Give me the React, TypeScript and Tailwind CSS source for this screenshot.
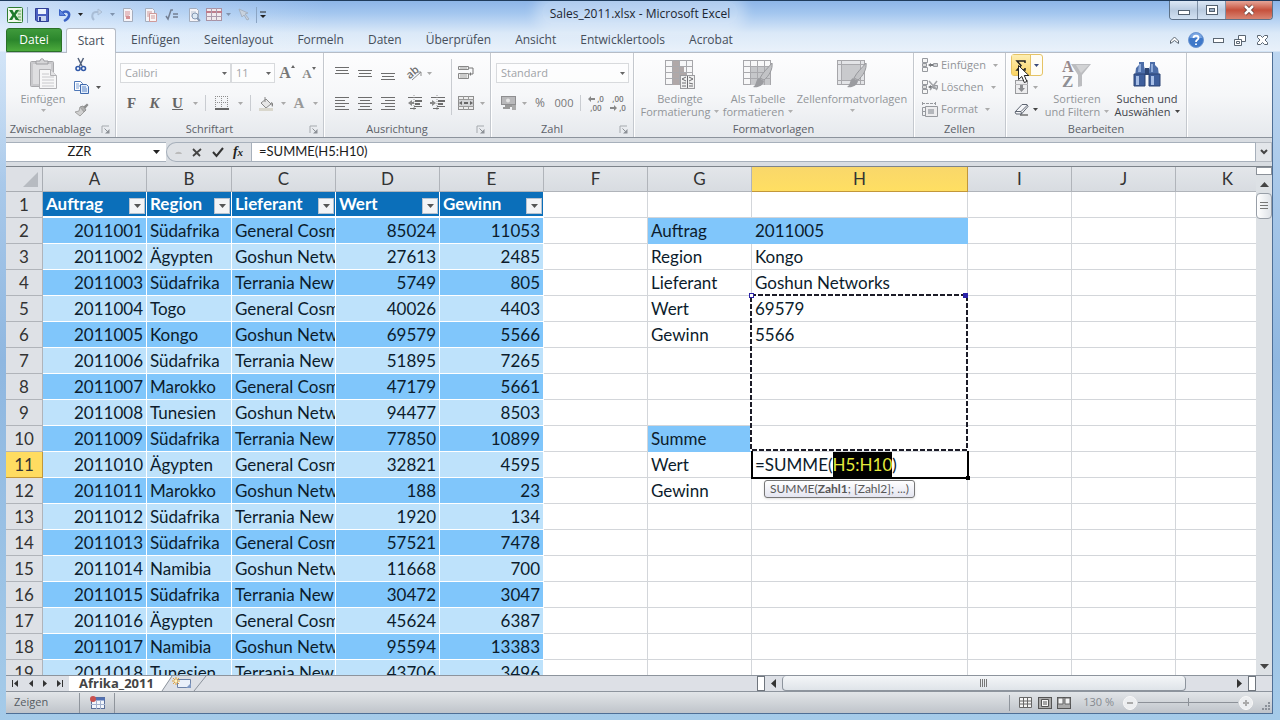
import type { ReactNode } from 'react';
import { clsx } from 'clsx';

/* ── Sheet data ── */

type Order = [number, string, string, number, number];

const ORDERS: Order[] = [
  [2011001, 'Südafrika', 'General Cosm', 85024, 11053],
  [2011002, 'Ägypten', 'Goshun Netw', 27613, 2485],
  [2011003, 'Südafrika', 'Terrania New', 5749, 805],
  [2011004, 'Togo', 'General Cosm', 40026, 4403],
  [2011005, 'Kongo', 'Goshun Netw', 69579, 5566],
  [2011006, 'Südafrika', 'Terrania New', 51895, 7265],
  [2011007, 'Marokko', 'General Cosm', 47179, 5661],
  [2011008, 'Tunesien', 'Goshun Netw', 94477, 8503],
  [2011009, 'Südafrika', 'Terrania New', 77850, 10899],
  [2011010, 'Ägypten', 'General Cosm', 32821, 4595],
  [2011011, 'Marokko', 'Goshun Netw', 188, 23],
  [2011012, 'Südafrika', 'Terrania New', 1920, 134],
  [2011013, 'Südafrika', 'General Cosm', 57521, 7478],
  [2011014, 'Namibia', 'Goshun Netw', 11668, 700],
  [2011015, 'Südafrika', 'Terrania New', 30472, 3047],
  [2011016, 'Ägypten', 'General Cosm', 45624, 6387],
  [2011017, 'Namibia', 'Goshun Netw', 95594, 13383],
  [2011018, 'Tunesien', 'Terrania New', 43706, 3496],
];

const COLUMNS = ['A', 'B', 'C', 'D', 'E', 'F', 'G', 'H', 'I', 'J', 'K'];
const HEADINGS = ['Auftrag', 'Region', 'Lieferant', 'Wert', 'Gewinn'];
const TABS = ['Einfügen', 'Seitenlayout', 'Formeln', 'Daten', 'Überprüfen', 'Ansicht', 'Entwicklertools', 'Acrobat'];

/* Lookup block in columns G and H, keyed by sheet row. */
const LOOKUP: Record<number, [string, string]> = {
  2: ['Auftrag', '2011005'],
  3: ['Region', 'Kongo'],
  4: ['Lieferant', 'Goshun Networks'],
  5: ['Wert', '69579'],
  6: ['Gewinn', '5566'],
  10: ['Summe', ''],
  11: ['Wert', ''],
  12: ['Gewinn', ''],
};

/* ── Small building blocks ── */

function Icon({ w = 16, h = 16, children }: { w?: number; h?: number; children: ReactNode }) {
  return (
    <svg width={w} height={h} viewBox={`0 0 ${w} ${h}`} fill="none" className="shrink-0 overflow-visible" aria-hidden="true">
      {children}
    </svg>
  );
}

function Arrow({ color = '#aaa' }: { color?: string }) {
  return (
    <Icon w={5} h={3}>
      <path d="M0 0h5L2.5 3z" fill={color} />
    </Icon>
  );
}

function Btn({ label, className, children }: { label: string; className?: string; children: ReactNode }) {
  return (
    <button type="button" aria-label={label} className={clsx('flex shrink-0 items-center justify-center', className)}>
      {children}
    </button>
  );
}

function Divider({ className }: { className?: string }) {
  return <span className={clsx('w-px shrink-0', className)} />;
}

function Group({ title, launcher, className, children }: { title: string; launcher?: boolean; className: string; children: ReactNode }) {
  return (
    <section className={clsx('flex shrink-0 flex-col border-r border-[#c4c8ce] shadow-[1px_0_0_#fff]', className)}>
      <div className="flex min-h-0 flex-1">{children}</div>
      <div className="flex h-4 items-center text-[11px] text-[#5c6168]">
        <span className="flex-1 text-center whitespace-nowrap">{title}</span>
        {launcher && (
          <Btn label={`${title} öffnen`} className="w-5">
            <Icon w={9} h={9}>
              <path d="M1 8V1h7" stroke="#a5a9ae" />
              <path d="M3.5 3.5L7 7" stroke="#8d9197" />
              <path d="M8.5 4v4.5H4z" fill="#8d9197" />
            </Icon>
          </Btn>
        )}
      </div>
    </section>
  );
}

function Combo({ label, value, className }: { label: string; value: string; className: string }) {
  return (
    <div className={clsx('relative h-5 shrink-0', className)}>
      <select
        aria-label={label}
        className="block h-full w-full appearance-none border border-[#d8dadd] bg-white/60 px-1 text-[11px] text-[#a0a3a7]"
      >
        <option>{value}</option>
      </select>
      <span className="pointer-events-none absolute inset-y-0 right-1 flex items-center">
        <Arrow color="#666" />
      </span>
    </div>
  );
}

function BigButton({ icon, lines, arrow, active, className }: { icon: ReactNode; lines: string[]; arrow: 'inline' | 'below'; active?: boolean; className: string }) {
  const arrowIcon = <Arrow color={active ? '#444' : '#b0b0b0'} />;
  return (
    <button
      type="button"
      className={clsx('flex shrink-0 flex-col items-center pt-[3px] text-[11px] leading-[13px]', active ? 'text-[#3f444b]' : 'text-[#929599]', className)}
    >
      <span className="flex h-9 items-center">{icon}</span>
      {lines.map((line, i) => (
        <span key={line} className="flex items-center gap-1 whitespace-nowrap">
          {line}
          {arrow === 'inline' && i === lines.length - 1 && arrowIcon}
        </span>
      ))}
      {arrow === 'below' && <span className="pt-1">{arrowIcon}</span>}
    </button>
  );
}

/* ── Icons ── */

function Lines({ rows }: { rows: [number, number, number][] }) {
  return (
    <Icon>
      {rows.map(([x, y, w]) => (
        <rect key={y} x={x} y={y} width={w} height={1} fill="#6d6d6d" />
      ))}
    </Icon>
  );
}

function ExcelIcon() {
  return (
    <Icon>
      <rect x="0.5" y="0.5" width="15" height="15" rx="1" fill="#f2faee" stroke="#2f7d32" />
      <path d="M10 2h5v12h-5z" fill="#d5ecd0" />
      <path d="M11 4h3M11 7h3M11 10h3M11 13h3" stroke="#67a765" />
      <path d="M2 3h3.5l1.6 3L8.8 3H12L8.7 8l3.5 5H8.7L7 9.8 5.2 13H2l3.3-5z" fill="#1f7a2d" />
    </Icon>
  );
}

function SaveIcon() {
  return (
    <Icon w={14} h={14}>
      <path d="M0.5 0.5h13v13H2L0.5 12z" fill="#4b5fc0" stroke="#303f94" />
      <rect x="3" y="1" width="8" height="5" fill="#eef3fd" />
      <rect x="3" y="8" width="8" height="5" fill="#c8d4ee" />
      <rect x="4" y="9" width="2" height="4" fill="#303f94" />
    </Icon>
  );
}

function UndoIcon({ redo }: { redo?: boolean }) {
  return (
    <Icon w={13} h={14}>
      {redo ? (
        <g stroke="#a9bdd6">
          <path d="M4 12C1 9 2 4 6 4h4" strokeWidth="2" />
          <path d="M8 1l4 3-4 3z" fill="#c6d5e8" />
        </g>
      ) : (
        <g stroke="#3a62c4">
          <path d="M4 5c4-3 8-1 7 3-1 3-3 4-5 5" strokeWidth="2.5" />
          <path d="M1.5 1.5v6h6z" fill="#5b83dd" />
        </g>
      )}
    </Icon>
  );
}

function PageIcon({ accent, mark }: { accent: string; mark: 'page' | 'copy' | 'lens' }) {
  return (
    <Icon w={14} h={14}>
      <path d="M2.5 0.5h7l2 2v11h-9z" fill="#f6f4f8" stroke="#a4adbd" />
      <path d="M4 4h5M4 6h5M4 8h4" stroke={accent} />
      {mark === 'page' && <path d="M5 8h4v3H5z" fill={accent} />}
      {mark === 'copy' && <path d="M6.5 5.5h7v8h-7zM8 8h4M8 10h4" fill="#f9f5f5" stroke={accent} />}
      {mark === 'lens' && (
        <g stroke="#8698b3">
          <circle cx="8" cy="8" r="3" fill="#dce8f4" />
          <path d="M10 10l3 3" strokeWidth="2" />
        </g>
      )}
    </Icon>
  );
}

function ScissorsIcon() {
  return (
    <Icon w={12} h={14}>
      <path d="M3 0l4 8M8.5 0L4.5 8" stroke="#52617c" strokeWidth="1.5" />
      <circle cx="3" cy="10.5" r="2" stroke="#3159a8" strokeWidth="1.6" />
      <circle cx="8.5" cy="10.5" r="2" stroke="#3159a8" strokeWidth="1.6" />
    </Icon>
  );
}

function CopyIcon() {
  return (
    <Icon w={15} h={13}>
      <path d="M0.5 0.5h6l2 2v7h-8z" fill="#fff" stroke="#4f78b8" />
      <path d="M2 3h3M2 5h4M2 7h3" stroke="#7da0d6" />
      <path d="M6.5 3.5h6l2 2v7h-8z" fill="#e4eefb" stroke="#3f69ad" />
      <path d="M8 6h4M8 8h5M8 10h5" stroke="#5d86c8" />
    </Icon>
  );
}

function BrushIcon() {
  return (
    <Icon w={15} h={13}>
      <path d="M9 4l4-3.5 1.5 1.5L11 6z" fill="#8d8d8d" />
      <path d="M6 4l3-1 3 4-2 2z" fill="#b0b0b0" stroke="#939393" />
      <path d="M6 4l4 5-4 4-5-4 4-1z" fill="#d0d0d0" stroke="#a3a3a3" />
    </Icon>
  );
}

function PasteIcon() {
  return (
    <Icon w={28} h={32}>
      <rect x="1.500" y="3.500" width="23" height="25" rx="1" fill="#c9c9cc" stroke="#a9a9ac" />
      <rect x="4" y="6" width="18" height="20" fill="#dedee0" />
      <path d="M7 6V3h4c0-3 4-3 4 0h4v3z" fill="#d6d6d8" stroke="#9c9ca0" />
      <path d="M10.5 11.5h11l6 6v13h-17z" fill="#f7f7f8" stroke="#b1b1b4" />
      <path d="M21.5 11.5v6h6" fill="#e2e2e4" stroke="#b1b1b4" />
      <path d="M13 16h7M13 19h12M13 22h12M13 25h12M13 28h12" stroke="#c8c8cb" />
    </Icon>
  );
}

function SheetIcon({ kind }: { kind: 'cond' | 'table' | 'style' }) {
  return (
    <Icon w={32} h={32}>
      <rect x="1.5" y="2.5" width="27" height="24" fill={kind === 'style' ? '#e3e4e7' : '#f7f7f8'} stroke="#a6a6aa" />
      {kind === 'cond' && <path d="M8 3h7v24H8zM15 8h5v6h-5zM15 14h8v6h-8z" fill="#b0a8a8" />}
      {kind === 'table' && <path d="M9 9h19v18H9z" fill="#c6c7ca" />}
      {kind === 'style' && <path d="M6 7h18v15H6z" fill="#c9cacd" />}
      <path
        d={kind === 'style' ? 'M5.5 2v25M24.5 2v25M1 6.5h28M1 22.5h28' : 'M8.5 2v25M15.5 2v25M22.5 2v25M1 8.5h28M1 14.5h28M1 20.5h28'}
        stroke="#a9a9ad"
      />
      {kind === 'cond' ? (
        <g>
          <rect x="16.5" y="17.5" width="14" height="13" fill="#f1f1f1" stroke="#9b9b9e" />
          <path d="M18 21l4-2M18 21l4 2M18 25h4M18 28h4M25 19l4 2-4 2M25 25l4 1M25 28h4M23.5 18v12" stroke="#6c6c70" />
        </g>
      ) : (
        <g>
          <path d="M30 5c1 6-3 13-8 17l-4-2c3-6 8-10 12-15z" fill="#c2c3c6" stroke="#98999d" />
          <path d="M17 20l5 3c-1 5-6 7-11 6 4-2 2-7 6-9z" fill="#9b9ca0" />
        </g>
      )}
    </Icon>
  );
}

function CellsIcon({ kind }: { kind: 'insert' | 'delete' | 'format' }) {
  return (
    <Icon w={16} h={15}>
      {kind === 'format' ? (
        <g stroke="#96999e">
          <path d="M0.5 0v3M0 1.5h13M13.5 0v3" strokeDasharray="3 1" />
          <path d="M3.5 4.5h12v10h-12z" fill="#ececee" />
          <path d="M6 7h6v5H6z" fill="#b4b7bc" stroke="none" />
          <path d="M0.5 5.5h3v4h-3zM0.5 9.5h3v4h-3z" />
        </g>
      ) : (
        <g stroke="#96999e">
          <path d="M0.5 0.5h5v4h-5zM0.5 9.5h5v4h-5z" fill="#f6f6f6" />
          <path d="M0.5 5.5h4v3h-4z" fill="#ddd" />
          <path d="M9 5l-3 2 3 2z" fill="#77797d" stroke="none" />
          <path d="M9 7h2" stroke="#77797d" strokeWidth="2" />
          <path d="M11.5 5.5h4v3h-4z" fill="#cfd1d4" />
          {kind === 'delete' && <path d="M7 1l8 9M15 1l-7 9" stroke="#a2a4a8" strokeWidth="1.5" />}
        </g>
      )}
    </Icon>
  );
}

function SortIcon() {
  return (
    <Icon w={30} h={30}>
      <path d="M9 5h20L20 16v11l-4 1V16z" fill="#bcbdc0" />
      <path d="M14 6h13l-8 8z" fill="#d2d3d5" />
      <text x="0" y="13" fontFamily="Liberation Serif, serif" fontSize="16" fontWeight="700" fill="#97898c">A</text>
      <text x="0" y="28" fontFamily="Liberation Serif, serif" fontSize="17" fontWeight="700" fill="#8e8f94">Z</text>
    </Icon>
  );
}

function BinocularsIcon() {
  return (
    <Icon w={28} h={26}>
      <path d="M6 1h5v4l1 4v6H2l1-8 3-3zM17 1h5v3l3 3 1 8H16V9l1-4z" fill="#4c6da8" />
      <path d="M12 7h4v7h-4z" fill="#2e4674" />
      <path d="M1 13h11v12H1zM16 13h11v12H16z" fill="#3f5f9c" stroke="#2c4475" />
      <path d="M3 15h3v9H3zM18 15h3v9h-3z" fill="#a7bee6" />
      <path d="M6 3h2v8H5zM18 3h2v8h-2z" fill="#90abd9" />
    </Icon>
  );
}

function Serif({ children, className }: { children: ReactNode; className?: string }) {
  return <span className={clsx('font-[Liberation_Serif,serif] font-bold', className)}>{children}</span>;
}

/* ── Title bar and ribbon ── */

function TitleBar() {
  return (
    <header className="flex h-[27px] shrink-0 items-start">
      <div className="flex h-full flex-1 items-center pl-px">
        <ExcelIcon />
        <Divider className="mx-1 h-4 bg-[#8ba5c4]" />
        <Btn label="Speichern" className="w-5"><SaveIcon /></Btn>
        <Btn label="Rückgängig" className="w-6"><UndoIcon /></Btn>
        <Btn label="Rückgängig-Liste" className="w-2"><Arrow color="#222" /></Btn>
        <Btn label="Wiederholen" className="w-6"><UndoIcon redo /></Btn>
        <Btn label="Wiederholen-Liste" className="w-2"><Arrow color="#7f93ad" /></Btn>
        <Btn label="Seite" className="w-6"><PageIcon accent="#d58f94" mark="page" /></Btn>
        <Btn label="Kopie" className="w-5"><PageIcon accent="#cf9a9a" mark="copy" /></Btn>
        <Btn label="Formeln prüfen" className="w-6">
          <Icon w={14} h={12}>
            <path d="M1 7l2 3L6 1h2" stroke="#737f92" strokeWidth="1.5" />
            <path d="M8 5h5M8 8h5" stroke="#737f92" strokeWidth="1.5" />
          </Icon>
        </Btn>
        <Btn label="Vorschau" className="w-5"><PageIcon accent="#b9c3d2" mark="lens" /></Btn>
        <Btn label="Tabelle" className="w-5">
          <Icon w={16} h={13}>
            <rect x="0.5" y="0.5" width="15" height="12" fill="#f1e9ed" stroke="#a893a5" />
            <path d="M0 4h16" stroke="#bf7c8c" strokeWidth="2" />
            <path d="M5.5 0v13M10.5 0v13M0 8.5h16" stroke="#ad9bae" />
          </Icon>
        </Btn>
        <Btn label="Tabellen-Liste" className="w-2"><Arrow color="#7f93ad" /></Btn>
        <Btn label="Objekte markieren" className="w-6">
          <Icon w={13} h={13}>
            <path d="M1 1l9 4-3 1 4 5-2 1-3-5-2 2z" fill="#c8d2de" stroke="#a5b1c1" />
          </Icon>
        </Btn>
        <Divider className="h-4 bg-[#8ba5c4]" />
        <Btn label="Symbolleiste anpassen" className="w-3">
          <Icon w={8} h={8}>
            <path d="M1 1h6" stroke="#222" />
            <path d="M1 4h6L4 7z" fill="#222" />
          </Icon>
        </Btn>
      </div>
      <h1 className="rounded-full bg-white/30 px-2 pt-[3px] text-[12px] leading-5 text-[#1c2530] shadow-[0_0_12px_8px_#ffffff4d]">Sales_2011.xlsx - Microsoft Excel</h1>
      <div className="flex flex-1 justify-end">
        <div className="flex h-[19px] overflow-hidden rounded-b border border-t-0 border-[#5d7187]">
          <Btn label="Minimieren" className="w-7 border-r border-[#7e90a5] bg-linear-to-b from-[#dce8f5] via-[#b9cbe0] to-[#d3e2f2]">
            <Icon w={12} h={12}><rect x="0.5" y="6.5" width="11" height="4" fill="#fff" stroke="#53616f" /></Icon>
          </Btn>
          <Btn label="Maximieren" className="w-7 border-r border-[#7e90a5] bg-linear-to-b from-[#dce8f5] via-[#b9cbe0] to-[#d3e2f2]">
            <Icon w={12} h={10}>
              <rect x="0.5" y="0.5" width="11" height="9" fill="#fff" stroke="#53616f" />
              <rect x="3.5" y="3.5" width="5" height="3" fill="#9fb1c6" stroke="#53616f" />
            </Icon>
          </Btn>
          <Btn label="Schließen" className="w-[46px] bg-linear-to-b from-[#e5a598] via-[#c5503c] to-[#d88472]">
            <Icon w={12} h={10}>
              <path d="M2 1l8 8M10 1L2 9" stroke="#5b3430" strokeWidth="4" />
              <path d="M2 1l8 8M10 1L2 9" stroke="#fff" strokeWidth="2.5" />
            </Icon>
          </Btn>
        </div>
      </div>
    </header>
  );
}

function TabRow() {
  return (
    <nav className="flex h-6 shrink-0 items-stretch text-[12px] text-[#464e5a]">
      <button type="button" className="w-14 rounded-t-[3px] border border-[#2b7128] bg-linear-to-b from-[#3f9a3c] via-[#2b862c] to-[#4cab3c] text-white">Datei</button>
      <button type="button" className="z-10 -mb-px ml-1 w-[50px] rounded-t-[3px] border border-b-0 border-[#b6bcc6] bg-[#fdfdfe]">Start</button>
      <div className="flex flex-1 pl-[3px]">
        {TABS.map((tab) => (
          <button key={tab} type="button" className="px-3">{tab}</button>
        ))}
      </div>
      <Btn label="Menüband minimieren" className="w-[22px]">
        <Icon w={9} h={8}><path d="M0.5 5L4.5 1l4 4v2.5l-4-3-4 3z" fill="#fff" stroke="#5b6672" /></Icon>
      </Btn>
      <Btn label="Hilfe" className="w-[22px]">
        <Icon>
          <circle cx="8" cy="8" r="7.5" fill="#3f78c9" stroke="#6f98d3" />
          <path d="M2 6a6 5 0 0 1 12 0z" fill="#7ba6e2" />
          <path d="M5.5 6c0-3 5-3 5 0 0 2-2.5 1.5-2.5 4M8 11.500v1.5" stroke="#fff" strokeWidth="1.8" />
        </Icon>
      </Btn>
      <Btn label="Fenster minimieren" className="w-[22px]">
        <Icon w={11} h={5}><rect x="0.5" y="0.5" width="10" height="4" fill="#fff" stroke="#5b6672" /></Icon>
      </Btn>
      <Btn label="Fenster wiederherstellen" className="w-[22px]">
        <Icon w={12} h={11}>
          <path d="M4.5 0.5h7v6h-7z" fill="#fff" stroke="#5b6672" />
          <path d="M0.5 4.5h7v6h-7z" fill="#fff" stroke="#5b6672" />
          <path d="M2.5 6.5h3v2h-3z" stroke="#5b6672" />
        </Icon>
      </Btn>
      <Btn label="Arbeitsmappe schließen" className="w-[22px]">
        <Icon w={11} h={10}><path d="M0.5 0.5h3l2 2 2-2h3v2L8 5l2.5 2.5v2h-3l-2-2-2 2h-3v-2L3 5 0.5 2.5z" fill="#fff" stroke="#5b6672" /></Icon>
      </Btn>
    </nav>
  );
}

function Ribbon() {
  return (
    <div className="flex h-[86px] shrink-0 border-t border-b border-t-[#b6bcc6] border-b-[#8c939c] bg-linear-to-b from-[#fdfdfe] via-[#f6f7f9] to-[#e6e9ed]">
      <Group title="Zwischenablage" launcher className="w-[110px]">
        <BigButton className="w-[62px] pl-3" icon={<PasteIcon />} lines={['Einfügen']} arrow="below" />
        <div className="flex flex-col pt-px">
          <Btn label="Ausschneiden" className="h-[22px] w-[26px]"><ScissorsIcon /></Btn>
          <div className="flex">
            <Btn label="Kopieren" className="h-[22px] w-[26px]"><CopyIcon /></Btn>
            <Btn label="Kopieroptionen" className="w-2"><Arrow color="#555" /></Btn>
          </div>
          <Btn label="Format übertragen" className="h-[22px] w-[26px]"><BrushIcon /></Btn>
        </div>
      </Group>

      <Group title="Schriftart" launcher className="w-[208px]">
        <div className="flex flex-col gap-2.5 px-1 pt-2.5">
          <div className="flex h-5 items-center">
            <Combo label="Schriftart" value="Calibri" className="w-[111px]" />
            <Combo label="Schriftgrad" value="11" className="w-11" />
            <Btn label="Schriftgrad vergrößern" className="w-6 text-[#777]">
              <Serif className="text-[16px] leading-none">A</Serif><span className="self-start"><Icon w={4} h={3}><path d="M0 3h4L2 0z" fill="#666" /></Icon></span>
            </Btn>
            <Btn label="Schriftgrad verkleinern" className="w-5 text-[#888]">
              <Serif className="text-[13px] leading-none">A</Serif><span className="self-start"><Icon w={4} h={3}><path d="M0 0h4L2 3z" fill="#666" /></Icon></span>
            </Btn>
          </div>
          <div className="flex h-5 items-center text-[15px] text-[#666]">
            <Btn label="Fett" className="w-[23px]"><Serif>F</Serif></Btn>
            <Btn label="Kursiv" className="w-[23px]"><Serif className="italic">K</Serif></Btn>
            <Btn label="Unterstrichen" className="w-[23px]"><Serif className="underline">U</Serif></Btn>
            <Btn label="Unterstreichungsart" className="w-3"><Arrow /></Btn>
            <Divider className="mx-1 h-4 bg-[#c9ccd1]" />
            <Btn label="Rahmen" className="w-6">
              <Icon w={14} h={14}>
                <path d="M0.5 0v13M6.5 0v13M12.5 0v13M0 0.5h13M0 6.5h13" stroke="#8e8e8e" strokeDasharray="1 1" />
                <path d="M0 13h14" stroke="#666" strokeWidth="2" />
              </Icon>
            </Btn>
            <Btn label="Rahmenart" className="w-3"><Arrow /></Btn>
            <Divider className="mx-1 h-4 bg-[#c9ccd1]" />
            <Btn label="Füllfarbe" className="w-6">
              <Icon w={16} h={15}>
                <path d="M6 1v5M2 7l5-4 5 5-5 4z" fill="#e6e6e6" stroke="#8a8a8a" />
                <path d="M12 6c3 1 2 4 1 5z" fill="#777" />
                <rect x="0" y="12" width="14" height="3" fill="#d9d7cd" />
              </Icon>
            </Btn>
            <Btn label="Füllfarben" className="w-2"><Arrow /></Btn>
            <Btn label="Schriftfarbe" className="w-6 text-[#999]"><Serif>A</Serif></Btn>
            <Btn label="Schriftfarben" className="w-2"><Arrow /></Btn>
          </div>
        </div>
      </Group>

      <Group title="Ausrichtung" launcher className="w-[167px]">
        <div className="flex w-[127px] flex-col gap-2.5 pt-2.5 pl-1.5">
          <div className="flex h-5 items-center">
            <Btn label="Oben ausrichten" className="w-[23px]"><Lines rows={[[1, 2, 14], [2, 5, 12], [1, 8, 14]]} /></Btn>
            <Btn label="Zentriert ausrichten" className="w-[23px]"><Lines rows={[[1, 5, 14], [2, 8, 12], [1, 11, 14]]} /></Btn>
            <Btn label="Unten ausrichten" className="w-[23px]"><Lines rows={[[1, 8, 14], [2, 11, 12], [1, 14, 14]]} /></Btn>
            <Btn label="Ausrichtung" className="ml-1 w-6">
              <Icon w={16} h={16}>
                <text x="0" y="11" fontFamily="Open Sans, sans-serif" fontSize="11" fontWeight="600" fill="#6e6e6e" transform="rotate(-40 6 9)">ab</text>
                <path d="M5 15l9-8M14 7v4M14 7h-4" stroke="#8d8d8d" />
              </Icon>
            </Btn>
            <Btn label="Ausrichtungsart" className="w-1"><Arrow /></Btn>
          </div>
          <div className="flex h-5 items-center">
            <Btn label="Linksbündig" className="w-[23px]"><Lines rows={[[1, 2, 14], [1, 5, 10], [1, 8, 14], [1, 11, 10], [1, 14, 14]]} /></Btn>
            <Btn label="Zentriert" className="w-[23px]"><Lines rows={[[1, 2, 14], [3, 5, 10], [1, 8, 14], [3, 11, 10], [1, 14, 14]]} /></Btn>
            <Btn label="Rechtsbündig" className="w-[23px]"><Lines rows={[[1, 2, 14], [5, 5, 10], [1, 8, 14], [5, 11, 10], [1, 14, 14]]} /></Btn>
            <Btn label="Einzug verkleinern" className="ml-1 w-[23px]">
              <Icon>
                <path d="M1 2.5h14M8 5.5h7M8 8.5h5M7 11.5h8M3 13.5h6" stroke="#6d6d6d" />
                <path d="M8 5h7v2H8zM8 8h5v2H8z" fill="#6d6d6d" />
                <path d="M7 0v16" stroke="#999" strokeDasharray="1 1" />
                <path d="M5 5L1 8l4 3V9h2V7H5z" fill="#888" />
              </Icon>
            </Btn>
            <Btn label="Einzug vergrößern" className="w-[23px]">
              <Icon>
                <path d="M1 2.5h14M8 5.5h7M8 8.5h5M7 11.5h8M3 13.5h6" stroke="#6d6d6d" />
                <path d="M8 5h7v2H8zM8 8h5v2H8z" fill="#6d6d6d" />
                <path d="M7 0v16" stroke="#999" strokeDasharray="1 1" />
                <path d="M2 5l4 3-4 3V9H0V7h2z" fill="#888" />
              </Icon>
            </Btn>
          </div>
        </div>
        <Divider className="mt-1.5 h-14 bg-[#c9ccd1]" />
        <div className="flex flex-col gap-2.5 pt-2.5 pl-1.5">
          <Btn label="Zeilenumbruch" className="h-5 w-4">
            <Icon>
              <path d="M0.5 1.5h10v3h-10zM0.5 8.5h10v5h-10z" fill="#eee" stroke="#888" />
              <path d="M2 3h7M2 10h7M2 12h7" stroke="#aaa" />
              <path d="M11 3h4v6h-3" stroke="#777" />
              <path d="M13 7v4l-2-2z" fill="#777" />
            </Icon>
          </Btn>
          <div className="flex h-5 items-center gap-1">
            <Btn label="Verbinden und zentrieren" className="w-4">
              <Icon>
                <rect x="0.5" y="1.5" width="15" height="13" fill="#eee" stroke="#8f8f8f" />
                <path d="M0 4.5h16M0 11.5h16M5.5 1v3M10.5 1v3M5.5 12v3M10.5 12v3" stroke="#999" />
                <path d="M1 5h14v6H1z" fill="#d3d4d6" />
                <path d="M1 8l3-2v4zM15 8l-3-2v4zM6 7h4v2H6z" fill="#666" />
              </Icon>
            </Btn>
            <Btn label="Verbindungsart" className="w-2"><Arrow /></Btn>
          </div>
        </div>
      </Group>

      <Group title="Zahl" launcher className="w-[143px]">
        <div className="flex flex-1 flex-col gap-2.5 pt-2.5 pr-1 pl-[5px]">
          <Combo label="Zahlenformat" value="Standard" className="w-full" />
          <div className="flex h-5 items-center text-[12px] text-[#777]">
            <Btn label="Buchhaltungsformat" className="w-6">
              <Icon w={17} h={16}>
                <rect x="1.5" y="1.5" width="14" height="8" fill="#b9b9bb" stroke="#8e8e90" />
                <circle cx="8" cy="5.5" r="2" fill="#e5e5e5" />
                <path d="M5 11h8M3 13h7" stroke="#999" strokeWidth="2" />
                <path d="M12 10h4v5h-4z" fill="#aaa" />
              </Icon>
            </Btn>
            <Btn label="Währungen" className="w-2"><Arrow /></Btn>
            <Btn label="Prozent" className="w-6">%</Btn>
            <Btn label="Tausendertrennzeichen" className="w-6 text-[11px]">000</Btn>
            <Divider className="mx-1 h-4 bg-[#c9ccd1]" />
            {/* 7px figures, two short lines with an arrow beside them */}
            <Btn label="Dezimalstelle hinzufügen" className="w-[22px] flex-col text-[8px] leading-[9px] font-semibold">
              <span className="flex items-center gap-0.5"><Icon w={7} h={6}><path d="M3 0L0 3l3 3V4h4V2H3z" fill="#888" /></Icon>,0</span>
              <span>,00</span>
            </Btn>
            <Btn label="Dezimalstelle löschen" className="w-[22px] flex-col text-[8px] leading-[9px] font-semibold">
              <span>,00</span>
              <span className="flex items-center gap-0.5"><Icon w={7} h={6}><path d="M4 0l3 3-3 3V4H0V2h4z" fill="#888" /></Icon>,0</span>
            </Btn>
          </div>
        </div>
      </Group>

      <Group title="Formatvorlagen" className="w-[280px]">
        <BigButton className="w-[88px] pl-1" icon={<SheetIcon kind="cond" />} lines={['Bedingte', 'Formatierung']} arrow="inline" />
        <BigButton className="w-[72px]" icon={<SheetIcon kind="table" />} lines={['Als Tabelle', 'formatieren']} arrow="inline" />
        <BigButton className="w-[116px]" icon={<SheetIcon kind="style" />} lines={['Zellenformatvorlagen']} arrow="below" />
      </Group>

      <Group title="Zellen" className="w-[92px]">
        <div className="flex flex-1 flex-col px-2 pt-px text-[11px] text-[#929599]">
          {([['insert', 'Einfügen'], ['delete', 'Löschen'], ['format', 'Format']] as const).map(([kind, text]) => (
            <button key={kind} type="button" className="flex h-[22px] items-center gap-[3px]">
              <CellsIcon kind={kind} />
              <span className="pr-1">{text}</span>
              <Arrow />
            </button>
          ))}
        </div>
      </Group>

      <Group title="Bearbeiten" className="w-[181px]">
        <div className="flex flex-col pt-px pl-[5px]">
          <div className="relative flex h-[22px] rounded-[3px] border border-[#e5c365] bg-[#fffdf5]">
            <Btn label="Summe" className="w-[19px] border-r border-[#e5c365] bg-linear-to-b from-[#fdeeb2] to-[#fbd462]">
              <Icon w={10} h={11}><path d="M9 3V1H1l4 4.5L1 10h8V8" stroke="#222" strokeWidth="1.5" /></Icon>
            </Btn>
            <Btn label="Summenfunktionen" className="w-[11px]"><Arrow color="#3a4a7a" /></Btn>
            {/* mouse pointer */}
            <span className="pointer-events-none absolute top-2.5 left-1.5 z-10">
              <Icon w={13} h={19}>
                <path d="M0.5 0.5v14l3.3-3 2.500 6 2.6-1-2.6-6h4.5z" fill="#fff" stroke="#222" />
              </Icon>
            </span>
          </div>
          <div className="flex h-[22px]">
            <Btn label="Füllbereich" className="w-5">
              <Icon w={13} h={14}>
                <rect x="0.5" y="0.5" width="12" height="13" fill="#ececee" stroke="#98999c" />
                <path d="M0 4.5h13" stroke="#b5b5b8" />
                <path d="M5 5h3v3h2l-3.500 4L3 8h2z" fill="#8b8c90" />
              </Icon>
            </Btn>
            <Btn label="Fülloptionen" className="w-[9px]"><Arrow /></Btn>
          </div>
          <div className="flex h-[22px]">
            <Btn label="Löschen" className="w-5">
              <Icon w={15} h={13}>
                <path d="M1 9l7-7.500h5l1 2L7.500 11H2z" fill="#f5f6f9" stroke="#5f6672" />
                <path d="M7.5 11L7 8.5H1.500M7 8.500l6.500-6.500" stroke="#5f6672" />
                <path d="M6 12h8" stroke="#333" />
              </Icon>
            </Btn>
            <Btn label="Löschoptionen" className="w-[9px]"><Arrow color="#444" /></Btn>
          </div>
        </div>
        <BigButton className="w-[68px]" icon={<SortIcon />} lines={['Sortieren', 'und Filtern']} arrow="inline" />
        <BigButton active className="w-[72px]" icon={<BinocularsIcon />} lines={['Suchen und', 'Auswählen']} arrow="inline" />
      </Group>
    </div>
  );
}

function FormulaBar() {
  return (
    <div className="flex h-[29px] shrink-0 border-b border-[#7d838a] bg-[#d9dde2] pt-1 pb-1 text-[#1c1c1c]">
      <div className="flex w-40 shrink-0 items-center border-y border-[#a7b0bb] bg-white pr-1.5">
        <input aria-label="Namenfeld" defaultValue="ZZR" className="min-w-0 flex-1 bg-transparent text-center text-[13px] outline-none font-[Lato,sans-serif]" />
        <Icon w={7} h={4}><path d="M0 0h7L3.5 4z" fill="#222" /></Icon>
      </div>
      <div className="flex w-[85px] shrink-0 items-center rounded-l-full border border-r-0 border-[#a7b0bb] bg-[#dfe2e6]">
        <span className="w-5 pl-2"><Icon w={7} h={3}><path d="M0 3c1-3 6-3 7 0z" fill="#bbb" /></Icon></span>
        <Btn label="Abbrechen" className="w-5">
          <Icon w={10} h={9}><path d="M1 1l7 7M9 1L1 8" stroke="#444" strokeWidth="1.800" /></Icon>
        </Btn>
        <Btn label="Eingeben" className="w-[21px]">
          <Icon w={12} h={10}><path d="M1 5l3.500 4L11 1" stroke="#333" strokeWidth="2" /></Icon>
        </Btn>
        <Btn label="Funktion einfügen" className="w-5 text-[14px] text-[#222]">
          <Serif className="leading-none italic">f<span className="text-[11px]">x</span></Serif>
        </Btn>
      </div>
      <input aria-label="Bearbeitungsleiste" defaultValue="=SUMME(H5:H10)" className="min-w-0 flex-1 border border-[#a7b0bb] bg-white px-[7px] text-[13px] outline-none font-[Lato,sans-serif]" />
      <Btn label="Bearbeitungsleiste erweitern" className="w-4 border border-l-0 border-[#b5bac1] bg-[#e3e6ea]">
        <Icon w={8} h={6}><path d="M1 1l3 3 3-3" stroke="#444" strokeWidth="2" /></Icon>
      </Btn>
    </div>
  );
}

/* ── Sheet ── */

type Fill = 'light' | 'mid' | 'block';

function Cell({ fill, right, clip = true, children }: { fill?: Fill; right?: boolean; clip?: boolean; children?: ReactNode }) {
  return (
    <td
      className={clsx(
        'h-[26px] border-r border-b px-[3px] whitespace-nowrap',
        clip ? 'overflow-hidden' : 'relative',
        right && 'text-right',
        fill === 'mid' && 'border-white bg-[#80c6fb]',
        fill === 'light' && 'border-white bg-[#bee2fb]',
        fill === 'block' && 'border-[#80c6fb] bg-[#80c6fb]',
        !fill && 'border-[#d3d6da] bg-white',
      )}
    >
      {children}
    </td>
  );
}

/* Dashed outline round the six referenced cells below its anchor. */
function ReferenceOutline() {
  return (
    <div className="pointer-events-none absolute -top-px -left-px z-10 h-[155px] w-[216px]">
      <svg className="h-full w-full overflow-visible" fill="none" aria-hidden="true">
        <rect width="100%" height="100%" stroke="#fff" strokeWidth="2" />
        <rect width="100%" height="100%" stroke="#1c1c28" strokeWidth="2" strokeDasharray="5 2" />
        <rect x="-1.5" y="-1.5" width="4" height="4" fill="#fff" stroke="#2a22a8" />
        <rect x="212" y="-2" width="5" height="5" fill="#2a22a8" />
      </svg>
    </div>
  );
}

function ActiveCell() {
  return (
    <>
      <span>=SUMME(<mark className="bg-black py-0.5 text-[#e4ea3c]">H5:H10</mark>)</span>
      <div className="pointer-events-none absolute -top-px -right-0.5 -bottom-0.5 -left-px border-2 border-t-0 border-black" />
      <div className="pointer-events-none absolute -right-[3px] -bottom-[3px] h-1 w-1 bg-black" />
      <div
        role="tooltip"
        className="absolute top-[28px] left-3 z-10 rounded-[3px] border border-[#777] bg-linear-to-b from-white to-[#e4e5f0] px-[5px] text-[12px] leading-4 text-[#575757] shadow-sm font-[Lato,sans-serif]"
      >
        SUMME(<b>Zahl1</b>; [Zahl2]; ...)
      </div>
    </>
  );
}

function Grid() {
  return (
    <div className="flex min-h-0 flex-1 overflow-hidden bg-white">
      <div className="min-w-0 flex-1 overflow-hidden">
        <table className="w-[1274px] table-fixed border-separate border-spacing-0 text-[17px] leading-[25px] text-[#0c1c2c] font-[Lato,sans-serif]">
          <colgroup>
            <col className="w-[37px]" />
            {COLUMNS.map((c) => (
              <col key={c} className={c === 'B' ? 'w-[85px]' : c === 'H' ? 'w-[216px]' : 'w-[104px]'} />
            ))}
          </colgroup>
          <thead>
            <tr className="text-[#333]">
              <th className="h-[25px] border-r border-b border-[#a9adb3] bg-[#dde0e5]" aria-label="Alles markieren">
                <div className="flex justify-end pr-1">
                  <Icon w={15} h={15}><path d="M15 0v15H0z" fill="#b7bbc1" /></Icon>
                </div>
              </th>
              {COLUMNS.map((c) => (
                <th
                  key={c}
                  className={clsx(
                    'h-[25px] border-r border-b font-normal leading-6',
                    c === 'H' ? 'border-[#c2973a] bg-linear-to-b from-[#f9d76a] to-[#ffdf62]' : 'border-[#b0b4ba] bg-linear-to-b from-[#e3e6ea] to-[#d8dce1]',
                  )}
                >
                  {c}
                </th>
              ))}
            </tr>
          </thead>
          <tbody>
            {Array.from({ length: 19 }, (_, i) => i + 1).map((row) => {
              const order = ORDERS[row - 2];
              const band = row % 2 === 0 ? 'mid' : 'light';
              return (
                <tr key={row}>
                  <th
                    className={clsx(
                      'h-[26px] border-r border-b font-normal text-[#333]',
                      row === 11 ? 'border-[#c2973a] bg-[#ffdc61]' : 'border-[#b0b4ba] bg-[#dee1e6]',
                    )}
                  >
                    {row}
                  </th>
                  {order ? (
                    <>
                      <Cell fill={band} right>{order[0]}</Cell>
                      <Cell fill={band}>{order[1]}</Cell>
                      <Cell fill={band}>{order[2]}</Cell>
                      <Cell fill={band} right>{order[3]}</Cell>
                      <Cell fill={band} right>{order[4]}</Cell>
                    </>
                  ) : (
                    HEADINGS.map((heading) => (
                      <th key={heading} className="h-[26px] border-r border-b-2 border-white bg-[#0b6fba] pr-px pl-[3px] text-white">
                        <div className="flex h-6 items-center justify-between leading-6">
                          {heading}
                          <Btn label={`${heading} filtern`} className="mt-1 h-4 w-4 border border-[#b9c3cf] bg-[#f3f4f6]">
                            <Icon w={7} h={4}><path d="M0 0h7L3.5 4z" fill="#555" /></Icon>
                          </Btn>
                        </div>
                      </th>
                    ))
                  )}
                  <Cell />
                  <Cell fill={row === 2 || row === 10 ? 'block' : undefined}>{LOOKUP[row]?.[0]}</Cell>
                  <Cell fill={row === 2 ? 'block' : undefined} clip={row !== 5 && row !== 11}>
                    {LOOKUP[row]?.[1]}
                    {row === 5 && <ReferenceOutline />}
                    {row === 11 && <ActiveCell />}
                  </Cell>
                  <Cell />
                  <Cell />
                  <Cell />
                </tr>
              );
            })}
          </tbody>
        </table>
      </div>

      {/* vertical scroll bar */}
      <div className="flex w-4 shrink-0 flex-col items-center bg-[#dde1e5]">
        <div className="h-2 w-full border border-[#8b9199] bg-white" />
        <Btn label="Nach oben" className="h-[18px] w-full">
          <Icon w={9} h={5}><path d="M0 5h9L4.5 0z" fill="#444" /></Icon>
        </Btn>
        <div className="flex h-[26px] w-full items-center justify-center rounded-sm border border-[#989fa8] bg-linear-to-r from-white to-[#dfe3e8]">
          <Icon w={8} h={8}><path d="M0 0.5h8M0 3.5h8M0 6.5h8" stroke="#777" /></Icon>
        </div>
        <div className="flex-1" />
        <Btn label="Nach unten" className="h-[18px] w-full">
          <Icon w={9} h={5}><path d="M0 0h9L4.5 5z" fill="#444" /></Icon>
        </Btn>
      </div>
    </div>
  );
}

function SheetBar() {
  return (
    <div className="flex h-4 shrink-0 border-t border-[#8d949d] bg-[#dde0e6]">
      <div className="flex w-[751px] items-stretch">
        <div className="flex w-[63px] items-center">
          <Btn label="Erstes Blatt" className="w-[18px]"><Icon w={6} h={7}><path d="M0.5 0v7" stroke="#333" /><path d="M6 0v7L2 3.5z" fill="#333" /></Icon></Btn>
          <Btn label="Vorheriges Blatt" className="w-[14px]"><Icon w={4} h={7}><path d="M4 0v7L0 3.5z" fill="#333" /></Icon></Btn>
          <Btn label="Nächstes Blatt" className="w-[14px]"><Icon w={4} h={7}><path d="M0 0v7l4-3.5z" fill="#333" /></Icon></Btn>
          <Btn label="Letztes Blatt" className="w-[16px]"><Icon w={6} h={7}><path d="M5.5 0v7" stroke="#333" /><path d="M0 0v7l4-3.5z" fill="#333" /></Icon></Btn>
        </div>
        <button type="button" className="bg-white pr-1.5 pl-2.5 text-[13px] leading-[15px] font-bold text-[#444]">Afrika_2011</button>
        <Btn label="Tabellenblatt einfügen" className="w-12">
          <Icon w={48} h={15}>
            <path d="M0 0h12L2 15H0z" fill="#fff" />
            <path d="M12 0L2 15M46 0L34 15" stroke="#8b929b" />
            <path d="M17.5 3.5h13v8h-13z" fill="#eaf0fa" stroke="#6d83a8" />
            <path d="M26 12h5V7z" fill="#8099c4" />
            <path d="M16 1v8M12 5h8M13 2l6 6M19 2l-6 6" stroke="#e0a23c" />
            <circle cx="16" cy="5" r="1.5" fill="#fff3c0" />
          </Icon>
        </Btn>
      </div>
      <div className="flex flex-1 items-stretch">
        <div className="w-2 border border-[#6f757d] bg-white" />
        <Btn label="Nach links" className="w-[17px]"><Icon w={5} h={9}><path d="M5 0v9L0 4.5z" fill="#333" /></Icon></Btn>
        <div className="flex w-[404px] items-center justify-center rounded-sm border border-t-0 border-[#8d949d] bg-linear-to-b from-[#f4f6f8] to-[#dfe4e9]">
          <Icon w={8} h={8}><path d="M0.5 0v8M2.5 0v8M4.5 0v8M6.5 0v8" stroke="#777" /></Icon>
        </div>
        <div className="flex-1" />
        <Btn label="Nach rechts" className="w-[17px]"><Icon w={5} h={9}><path d="M0 0v9l5-4.5z" fill="#333" /></Icon></Btn>
        <div className="mr-4 w-2 border border-[#6f757d] bg-white" />
      </div>
    </div>
  );
}

function StatusBar() {
  return (
    <footer className="flex h-[22px] shrink-0 items-center border-t border-[#8d949d] bg-linear-to-b from-[#e2e5e8] to-[#bfc4ca] text-[11px] text-[#555b62]">
      <span className="w-[73px] pl-2">Zeigen</span>
      <Divider className="h-5 bg-[#8f959c]" />
      <Btn label="Makro aufzeichnen" className="w-[34px]">
        <Icon w={15} h={13}>
          <rect x="1.5" y="1.5" width="13" height="11" fill="#f3f6fb" stroke="#5b6f98" />
          <path d="M1 3h14" stroke="#5271b3" strokeWidth="3" />
          <path d="M1 8.5h14M6.5 4v9M10.5 4v9" stroke="#a3b2cf" />
          <circle cx="3" cy="3" r="3" fill="#c9504d" />
        </Icon>
      </Btn>
      <Divider className="h-5 bg-[#8f959c]" />
      <span className="flex-1" />
      <Divider className="h-4 bg-[#8f959c]" />
      <Btn label="Normal" className="ml-1.5 w-[19px]">
        <Icon w={13} h={11}><path d="M0.5 0.5h12v10h-12zM4.5 0v11M8.5 0v11M0 4h13M0 7h13" fill="#f5f5f5" stroke="#666" /></Icon>
      </Btn>
      <Btn label="Seitenlayout" className="w-[19px]">
        <Icon w={14} h={12}><rect x="0.5" y="0.5" width="13" height="11" fill="#aaa" stroke="#555" /><path d="M3.5 2.5h7v7h-7zM5 5h4M5 7h4" fill="#f5f5f5" stroke="#555" /></Icon>
      </Btn>
      <Btn label="Umbruchvorschau" className="w-[19px]">
        <Icon w={14} h={12}><rect x="0.5" y="0.5" width="13" height="11" fill="#aaa" stroke="#555" /><path d="M1 1h5v6H1zM8 1h5v6H8z" fill="#f5f5f5" stroke="#666" /></Icon>
      </Btn>
      <span className="w-[45px] pr-1 text-right text-[#858a90]">130 %</span>
      <Btn label="Verkleinern" className="ml-1 w-4">
        <Icon><circle cx="8" cy="8" r="6.5" fill="#eceef0" stroke="#f8f8f8" /><path d="M5 8h6" stroke="#aaa" strokeWidth="2" /></Icon>
      </Btn>
      <input
        type="range"
        aria-label="Zoom"
        className="h-3 w-[100px] appearance-none bg-transparent [&::-webkit-slider-runnable-track]:h-px [&::-webkit-slider-runnable-track]:bg-[#8c9198] [&::-webkit-slider-thumb]:-mt-1 [&::-webkit-slider-thumb]:h-2 [&::-webkit-slider-thumb]:w-px [&::-webkit-slider-thumb]:appearance-none [&::-webkit-slider-thumb]:bg-[#8c9198]"
      />
      <Btn label="Vergrößern" className="w-4">
        <Icon><circle cx="8" cy="8" r="6.5" fill="#eceef0" stroke="#f8f8f8" /><path d="M5 8h6M8 5v6" stroke="#aaa" strokeWidth="2" /></Icon>
      </Btn>
      <span className="flex w-[18px] justify-end self-end p-0.5">
        <Icon w={9} h={9}><path d="M7 1h2M7 4h2M4 4h2M7 7h2M4 7h2M1 7h2" stroke="#8b9199" strokeWidth="2" /></Icon>
      </span>
    </footer>
  );
}

export default function App() {
  return (
    <div className="h-screen overflow-hidden border-t border-[#1f3b5c] bg-linear-to-b from-[#c4dbf3] via-[#8fb7e0] to-[#a5cbe9] font-['Open_Sans',sans-serif]">
      <div className="flex h-full flex-col bg-[radial-gradient(ellipse_at_0%_0%,#eaf4ffaa_0,transparent_18%),linear-gradient(to_bottom,#8db5e8_0,#a3c6ef_12px,#dbe9f8_32px,#e9f1fa_50px,transparent_51px)] pr-[7px] pb-1.5 pl-1.5">
        <TitleBar />
        <TabRow />
        <main className="flex min-h-0 flex-1 flex-col border-r border-b border-[#4e6f96]">
          <Ribbon />
          <FormulaBar />
          <Grid />
          <SheetBar />
          <StatusBar />
        </main>
      </div>
    </div>
  );
}
